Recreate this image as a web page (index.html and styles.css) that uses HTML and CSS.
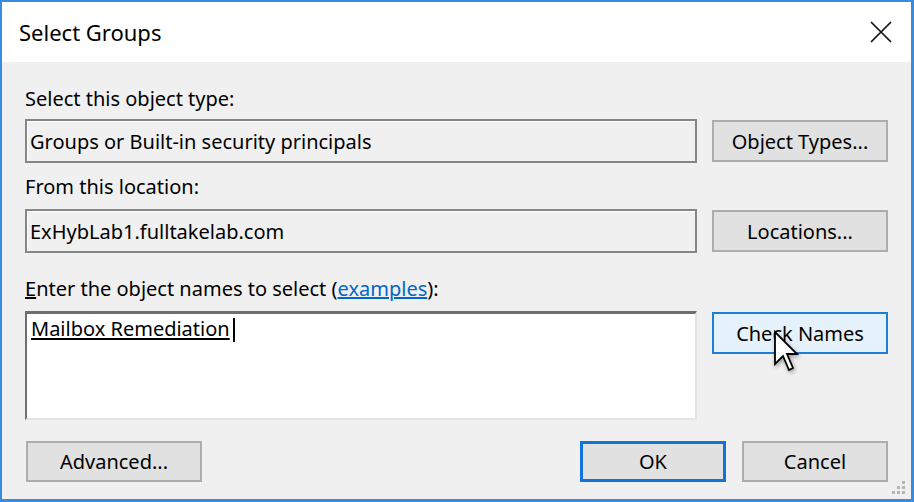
FILE: index.html
```html
<!DOCTYPE html>
<html lang="en">
<head>
  <meta charset="UTF-8">
  <meta name="viewport" content="width=device-width, initial-scale=1.0">
  <title>Select Groups</title>
  <link rel="stylesheet" href="styles.css">
</head>
<body>
  <div class="window">
    <div class="titlebar">
      <span class="title">Select Groups</span>
      <button class="close" aria-label="Close">
        <svg width="22" height="22" viewBox="0 0 22 22">
          <path d="M1 1 L21 21 M21 1 L1 21" stroke="#111" stroke-width="1.7" fill="none"/>
        </svg>
      </button>
    </div>

    <div class="content">
      <div class="label label-first">Select this object type:</div>
      <div class="row">
        <div class="textbox">Groups or Built-in security principals</div>
        <button class="btn">Object Types...</button>
      </div>

      <div class="label label-second">From this location:</div>
      <div class="row">
        <div class="textbox">ExHybLab1.fulltakelab.com</div>
        <button class="btn">Locations...</button>
      </div>

      <div class="label label-third"><u>E</u>nter the object names to select (<a href="#">examples</a>):</div>
      <div class="row row-top">
        <div class="names"><span class="name">Mailbox Remediation</span><span class="caret"></span></div>
        <button class="btn btn-hover">Check Names</button>
      </div>

      <div class="actions">
        <button class="btn">Advanced...</button>
        <span class="spacer"></span>
        <button class="btn btn-small btn-default">OK</button>
        <button class="btn btn-small">Cancel</button>
      </div>
    </div>

    <!-- mouse pointer over Check Names -->
    <svg class="pointer" width="28" height="44" viewBox="0 0 14 22">
      <path d="M1 1 L1 17 L5 13 L8 20 L10 19 L7 12 L12 12 Z" fill="#fff" stroke="#000" stroke-width="0.9" stroke-linejoin="miter"/>
    </svg>

    <svg class="grip" width="14" height="14" viewBox="0 0 14 14">
      <rect x="11" y="0" width="3" height="3" fill="#b5b5b5"/>
      <rect x="11" y="5" width="3" height="3" fill="#b5b5b5"/>
      <rect x="6" y="5" width="3" height="3" fill="#b5b5b5"/>
      <rect x="11" y="10" width="3" height="3" fill="#b5b5b5"/>
      <rect x="6" y="10" width="3" height="3" fill="#b5b5b5"/>
      <rect x="1" y="10" width="3" height="3" fill="#b5b5b5"/>
    </svg>
  </div>
</body>
</html>
```

FILE: styles.css
```css
html, body {
  margin: 0;
  padding: 0;
  background-color: #ffffff;
}
body {
  font-family: 'Noto Sans', 'Open Sans', sans-serif;
  color: #000;
}
.window {
  position: relative;
  box-sizing: border-box;
  width: 914px;
  height: 502px;
  border: 2px solid #3a8ae0;
  border-right-width: 3px;
  border-bottom-width: 3px;
  display: flex;
  flex-direction: column;
}
.titlebar {
  height: 60px;
  background-color: #fff;
  display: flex;
  align-items: center;
  justify-content: space-between;
  padding: 0 19px 0 17px;
}
.title {
  font-size: 22px;
  color: #000;
}
.close {
  background: none;
  border: none;
  padding: 0;
  width: 22px;
  height: 22px;
  display: flex;
}
.content {
  flex: 1;
  background-color: #f0f0f0;
  padding: 23px 23px 0 23px;
  font-size: 20px;
}
.label {
  line-height: 28px;
  height: 28px;
  white-space: nowrap;
}
.label-first {
  margin-bottom: 6px;
}
.label-second {
  margin-top: 10px;
  margin-bottom: 8px;
}
.label-third {
  margin-top: 22px;
  margin-bottom: 8px;
}
.label a {
  color: #0066cc;
  text-decoration: underline;
}
.row {
  display: flex;
  align-items: center;
  gap: 15px;
}
.row-top {
  align-items: flex-start;
}
.textbox {
  flex: 1;
  box-sizing: border-box;
  height: 44px;
  border: 2px solid #858585;
  box-shadow: inset 1px 1px 0 #fff;
  background-color: #f0f0f0;
  padding-left: 3px;
  display: flex;
  align-items: center;
  white-space: nowrap;
}
.textbox-wide {
  letter-spacing: -0.2px;
}
.names {
  flex: 1;
  box-sizing: border-box;
  height: 109px;
  background-color: #fff;
  border-top: 3px solid #6e6e6e;
  border-left: 2px solid #6e6e6e;
  border-right: 2px solid #e3e3e3;
  border-bottom: 2px solid #e3e3e3;
  padding: 1px 0 0 4px;
  line-height: 28px;
  display: flex;
  align-items: flex-start;
}
.name {
  text-decoration: underline;
  text-underline-offset: 2px;
  text-decoration-thickness: 1.5px;
}
.caret {
  width: 2px;
  height: 24px;
  margin-top: 3px;
  margin-left: 3px;
  background-color: #000;
}
.btn {
  box-sizing: border-box;
  width: 176px;
  height: 42px;
  background-color: #e1e1e1;
  border: 2px solid #adadad;
  font-family: inherit;
  font-size: 20px;
  color: #000;
  padding: 0;
  white-space: nowrap;
}
.btn-hover {
  background-color: #e5f1fb;
  border-color: #1e7ed8;
  margin-top: 1px;
}
.btn-small {
  width: 146px;
}
.btn-default {
  border: 3px solid #1473d6;
}
.actions {
  display: flex;
  gap: 16px;
  margin-top: 21px;
  padding-left: 1px;
}
.actions .btn {
  height: 41px;
}
.spacer {
  flex: 1;
}
.pointer {
  position: absolute;
  left: 771px;
  top: 328px;
  filter: drop-shadow(1px 2px 2px rgba(0, 0, 0, 0.35));
}
.grip {
  position: absolute;
  left: 889px;
  top: 479px;
}
```
